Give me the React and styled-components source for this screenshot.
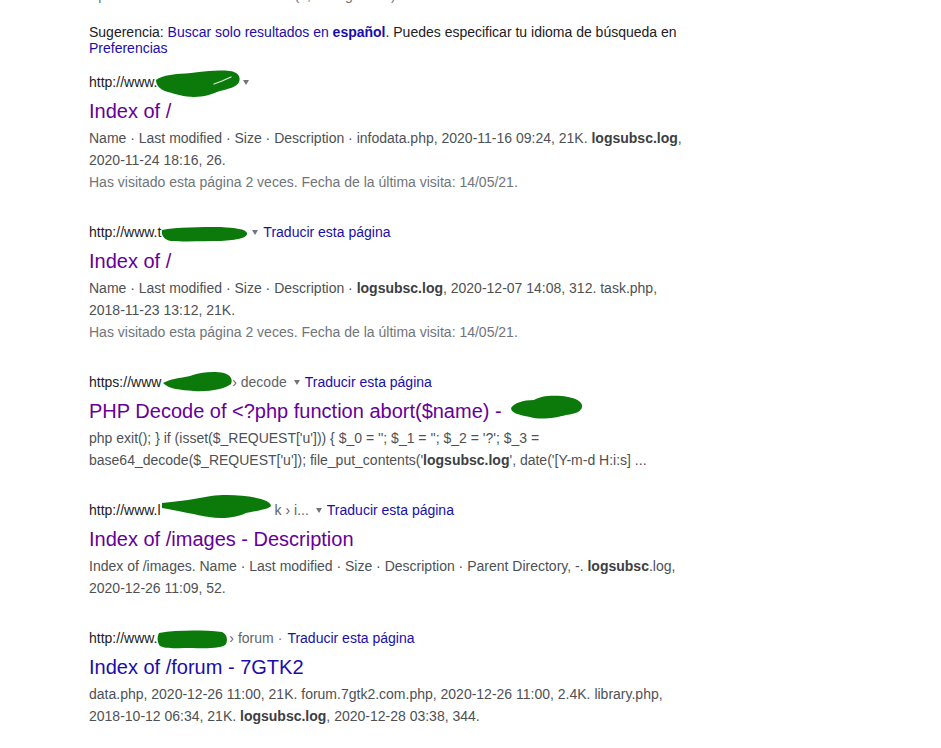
import React from 'react';
import styled, {createGlobalStyle} from 'styled-components';

const GlobalStyle = createGlobalStyle`
    body {
        margin: 0;
        background: #fff;
        font-family: "Liberation Sans", Arial, sans-serif;
    }
`;

const Page = styled.div`
    padding-left: 89px;
    width: 600px;
    font-size: 14px;
    color: #202124;
`;

const Stats = styled.div`
    margin-top: -13px;
    line-height: 16px;
    color: #70757a;
`;

const Suggestion = styled.div`
    margin-top: 21px;
    line-height: 16px;
`;

const Link = styled.a`
    color: #1a0dab;
    text-decoration: none;
    cursor: pointer;
`;

const Result = styled.div`
    margin-top: ${p => p.first ? 16 : 29}px;
`;

const UrlRow = styled.div`
    line-height: 20px;
    height: 20px;
    white-space: nowrap;
    color: #202124;
`;

const Crumb = styled.span`
    color: #5f6368;
`;

const Arrow = styled.span`
    display: inline-block;
    vertical-align: middle;
    margin: 0 5px 2px ${p => p.tight ? 3 : 7}px;
    border-style: solid;
    border-width: 5px 3.5px 0 3.5px;
    border-color: #70757a transparent transparent transparent;
`;

const Dot = styled.span`
    color: #70757a;
    margin: 0 5px 0 4px;
`;

const Title = styled.h3`
    margin: 6px 0 0;
    font-size: 20px;
    font-weight: normal;
    line-height: 26px;
    color: ${p => p.visited ? '#660099' : '#1a0dab'};
    white-space: nowrap;
`;

const Snippet = styled.div`
    margin-top: 3px;
    line-height: 22px;
    color: #4d5156;

    b {
        color: #3c4043;
    }
`;

const Visited = styled.div`
    color: #70757a;
`;

const RedactionBox = styled.span`
    position: relative;
    display: inline-block;
    width: ${p => p.w}px;
    height: 14px;
`;

const BlobSvg = styled.svg`
    position: absolute;
    overflow: visible;
    pointer-events: none;
`;

// green marker scribbles hiding the domains
const Redaction = ({w, bw, bh, top, left = 0, d, streak}) => (
    <RedactionBox w={w}>
        <BlobSvg width={bw} height={bh} viewBox={`0 0 ${bw} ${bh}`}
                 style={{top, left}}>
            <path d={d} fill="#0b7a0b"/>
            {streak && <path d={streak} stroke="#dfe8df" strokeWidth="1.3"
                             fill="none" strokeLinecap="round"/>}
        </BlobSvg>
    </RedactionBox>
);

const blobs = {
    r1: 'M0,10 C6,5 20,4 35,3 C50,1 62,0 74,1 C82,2 85,7 83,12 C81,17 72,19 64,21 C56,24 48,27 38,27 C28,27 20,24 12,22 C5,20 0,16 0,10 Z',
    r1s: 'M58,14 L66,11 L75,7',
    r2: 'M1,3 C15,0 40,0 60,0 C74,1 85,2 86,6 C87,11 76,13 60,14 C45,14 25,15 10,14 C3,13 0,8 1,3 Z',
    r3: 'M1,12 C8,8 18,7 28,5 C38,1 52,0 62,2 C69,4 71,9 69,13 C63,18 47,21 32,20 C18,19 7,18 1,12 Z',
    r3t: 'M1,13 C4,8 13,5 24,5 C30,1 40,0 52,1 C62,2 71,5 72,10 C73,16 66,19 56,20 C46,23 30,25 20,22 C9,20 1,18 1,13 Z',
    r4: 'M1,9 C20,7 35,5 50,2 C65,0 85,1 100,5 C106,7 110,9 110,12 C108,15 95,17 85,19 C75,24 60,25 48,23 C35,21 20,17 1,14 Z',
    r5: 'M2,3 C20,0 45,0 65,2 C70,4 71,10 69,14 C67,18 50,19 35,18 C20,18 8,19 3,16 C0,12 0,7 2,3 Z',
};

const Translate = () => <Link>Traducir esta página</Link>;

const App = () => (
    <Page>
        <GlobalStyle/>
        <Stats>Aproximadamente 14 resultados (0,43 segundos)</Stats>
        <Suggestion>
            Sugerencia: <Link>Buscar solo resultados en <b>español</b></Link>.
            Puedes especificar tu idioma de búsqueda en <Link>Preferencias</Link>
        </Suggestion>

        <Result first>
            <UrlRow>
                http://www.
                <Redaction w={83} bw={84} bh={27} top={-3} left={-1} d={blobs.r1} streak={blobs.r1s}/>
                <Arrow tight/>
            </UrlRow>
            <Title visited>Index of /</Title>
            <Snippet>
                Name · Last modified · Size · Description · infodata.php, 2020-11-16 09:24, 21K.{' '}
                <b>logsubsc.log</b>, 2020-11-24 18:16, 26.
                <Visited>Has visitado esta página 2 veces. Fecha de la última visita: 14/05/21.</Visited>
            </Snippet>
        </Result>

        <Result>
            <UrlRow>
                http://www.t
                <Redaction w={84} bw={87} bh={15} top={4} d={blobs.r2}/>
                <Arrow/>
                <Translate/>
            </UrlRow>
            <Title visited>Index of /</Title>
            <Snippet>
                Name · Last modified · Size · Description · <b>logsubsc.log</b>, 2020-12-07 14:08, 312.
                task.php, 2018-11-23 13:12, 21K.
                <Visited>Has visitado esta página 2 veces. Fecha de la última visita: 14/05/21.</Visited>
            </Snippet>
        </Result>

        <Result>
            <UrlRow>
                https://www
                <Redaction w={67} bw={71} bh={21} top={-2} left={1} d={blobs.r3}/>
                <Crumb> › decode</Crumb>
                <Arrow/>
                <Translate/>
            </UrlRow>
            <Title visited>
                PHP Decode of &lt;?php function abort($name) -{' '}
                <Redaction w={73} bw={73} bh={25} top={-9} left={3} d={blobs.r3t}/>
            </Title>
            <Snippet>
                php exit(); {'}'} if (isset($_REQUEST['u'])) {'{'} $_0 = ''; $_1 = ''; $_2 = '?'; $_3 =
                base64_decode($_REQUEST['u']); file_put_contents('<b>logsubsc.log</b>', date('[Y-m-d H:i:s] ...
            </Snippet>
        </Result>

        <Result>
            <UrlRow>
                http://www.l
                <Redaction w={114} bw={111} bh={25} top={-7} d={blobs.r4}/>
                <Crumb>k › i...</Crumb>
                <Arrow/>
                <Translate/>
            </UrlRow>
            <Title visited>Index of /images - Description</Title>
            <Snippet>
                Index of /images. Name · Last modified · Size · Description · Parent Directory, -.{' '}
                <b>logsubsc</b>.log, 2020-12-26 11:09, 52.
            </Snippet>
        </Result>

        <Result>
            <UrlRow>
                http://www.
                <Redaction w={68} bw={71} bh={19} top={1} d={blobs.r5}/>
                <Crumb> › forum</Crumb>
                <Dot>·</Dot>
                <Translate/>
            </UrlRow>
            <Title>Index of /forum - 7GTK2</Title>
            <Snippet>
                data.php, 2020-12-26 11:00, 21K. forum.7gtk2.com.php, 2020-12-26 11:00, 2.4K. library.php,
                2018-10-12 06:34, 21K. <b>logsubsc.log</b>, 2020-12-28 03:38, 344.
            </Snippet>
        </Result>
    </Page>
);

export default App;
